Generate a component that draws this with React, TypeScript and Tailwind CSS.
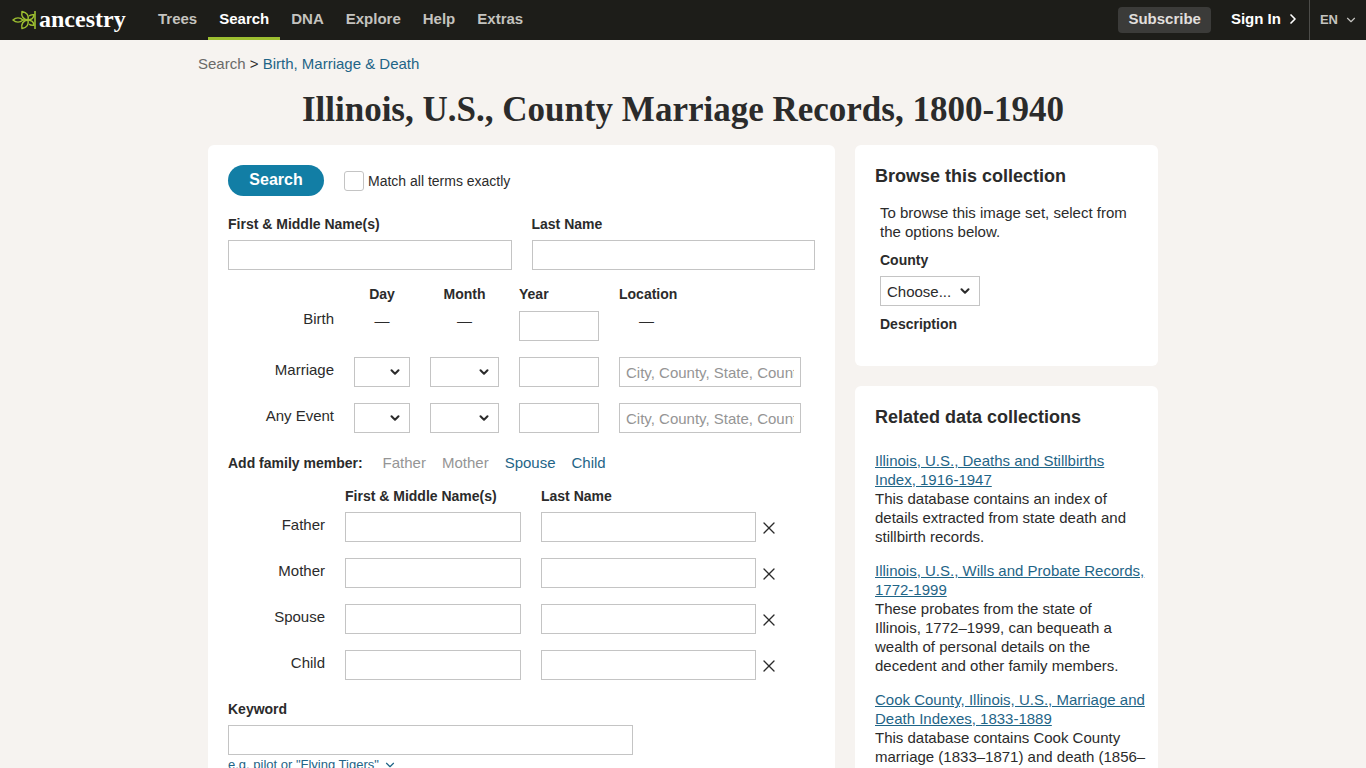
import { useState } from "react"
import type { ReactNode, SelectHTMLAttributes } from "react"
import { ChevronDown, ChevronRight, X } from "lucide-react"

const NAV = ["Trees", "Search", "DNA", "Explore", "Help", "Extras"]
const RELATIVES = ["Father", "Mother", "Spouse", "Child"]
const EVENTS = ["Marriage", "Any Event"]
const MONTHS = ["Jan", "Feb", "Mar", "Apr", "May", "Jun", "Jul", "Aug", "Sep", "Oct", "Nov", "Dec"]

const RELATED = [
  {
    title: "Illinois, U.S., Deaths and Stillbirths Index, 1916-1947",
    text: "This database contains an index of details extracted from state death and stillbirth records.",
  },
  {
    title: "Illinois, U.S., Wills and Probate Records, 1772-1999",
    text: "These probates from the state of Illinois,\u00a01772–1999, can bequeath a wealth of personal details on the decedent and other family members.",
  },
  {
    title: "Cook County, Illinois, U.S., Marriage and Death Indexes, 1833-1889",
    text: "This database contains Cook County marriage (1833–1871) and death (1856–1889) notices.",
  },
]

const field = "h-[30px] w-full min-w-0 border border-[#c4c4c4] bg-white px-1.5 text-[15px] text-[#2b2b2b] placeholder:text-[#959595]"
const label = "text-sm leading-5 font-bold"

function Logo() {
  return (
    <a href="#" aria-label="Ancestry home" className="flex h-10 w-[147px] items-center pl-3">
      <svg viewBox="0 0 24 20" className="h-5 w-6 shrink-0" fill="none" stroke="#9cbe30" strokeWidth="1.5" strokeLinejoin="round">
        <path d="M23 1v18" strokeWidth="1.6" />
        <path d="M1 10c3-2.800 7-2.800 10 0-3 2.800-7 2.800-10 0z" />
        <path d="M11 10h5" />
        <path d="M10 1.500C9 6 11 9.500 16 10c1-4.500-1-7.500-6-8.500z" />
        <path d="M10 18.500C9 14 11 10.500 16 10c1 4.500-1 7.500-6 8.500z" />
        <path d="M17 6c1-1 3-1.500 5-1.200-.2 3-2.500 5-6 5.200M17 14c1 1 3 1.500 5 1.200-.2-3-2.500-5-6-5.200" />
      </svg>
      <span className="ml-[3px] pb-0.5 font-['Liberation_Serif'] text-2xl leading-6 font-bold text-white">ancestry</span>
    </a>
  )
}

function Header() {
  return (
    <header className="flex h-10 items-center bg-[#1d1d19] text-[15px] font-bold">
      <Logo />
      <nav className="flex h-full">
        {NAV.map((item) => (
          <a
            key={item}
            href="#"
            className={
              item === "Search"
                ? "flex h-full items-center px-[11px] pb-0.5 text-white shadow-[inset_0_-3px_0_#9cbe30]"
                : "flex h-full items-center px-[11px] pb-0.5 text-[#c4c3bf]"
            }
          >
            {item}
          </a>
        ))}
      </nav>
      <div className="ml-auto flex h-full items-center">
        <a href="#" className="flex h-[26px] items-center rounded-sm bg-[#3b3b39] px-2.5 pb-0.5 text-[#e0dfdc]">
          Subscribe
        </a>
        <a href="#" className="ml-5 flex items-center gap-1 pb-0.5 text-white">
          Sign In
          <ChevronRight className="size-4" strokeWidth={2.5} />
        </a>
        <button className="ml-2 flex h-full items-center gap-1.5 border-l border-[#4c4c49] px-2 pl-2.5 text-[13px] text-[#c4c3bf]">
          EN
          <ChevronDown className="size-3.5" />
        </button>
      </div>
    </header>
  )
}

function Card({ children }: { children: ReactNode }) {
  return <section className="rounded-md bg-white p-5">{children}</section>
}

function Picker(props: SelectHTMLAttributes<HTMLSelectElement>) {
  return (
    <div className="relative">
      <select {...props} className={`${field} appearance-none`} />
      <ChevronDown className="pointer-events-none absolute top-2 right-2 size-3.5" strokeWidth={3.5} />
    </div>
  )
}

function SearchForm() {
  const [relatives, setRelatives] = useState(RELATIVES)

  return (
    <form onSubmit={(e) => e.preventDefault()}>
      <div className="flex items-start gap-5">
        <button className="h-[31px] w-24 rounded-full bg-[#127ea5] pb-0.5 text-base font-bold text-white">Search</button>
        <label className="mt-1.5 flex h-5 items-center gap-1 text-sm">
          <input type="checkbox" className="size-5 appearance-none rounded-[3px] border border-[#c4c4c4] bg-white checked:bg-[#127ea5]" />
          Match all terms exactly
        </label>
      </div>

      <div className="mt-[18px] grid grid-cols-2 gap-5">
        {["First & Middle Name(s)", "Last Name"].map((name) => (
          <label key={name} className={label}>
            {name}
            <input type="text" className={`${field} mt-1.5 block`} />
          </label>
        ))}
      </div>

      {/* Life events */}
      <div className="mt-3.5 grid grid-cols-[106px_56px_69px_80px_182px] gap-x-5 text-[15px]">
        <span />
        <span className={`${label} text-center`}>Day</span>
        <span className={`${label} text-center`}>Month</span>
        <span className={label}>Year</span>
        <span className={label}>Location</span>
      </div>
      <div className="mt-[7px] grid grid-cols-[106px_56px_69px_80px_182px] gap-x-5 gap-y-4 text-[15px]">
        <label htmlFor="birth-year" className="text-right leading-4">
          Birth
        </label>
        <span className="text-center leading-5">—</span>
        <span className="text-center leading-5">—</span>
        <input id="birth-year" type="text" className={field} />
        <span className="pl-5 leading-5">—</span>
        {EVENTS.map((event) => (
          <div key={event} className="contents">
            <span className="text-right leading-[26px]">{event}</span>
            <Picker aria-label={`${event} day`}>
              <option />
              {Array.from({ length: 31 }, (_, i) => (
                <option key={i}>{i + 1}</option>
              ))}
            </Picker>
            <Picker aria-label={`${event} month`}>
              <option />
              {MONTHS.map((month) => (
                <option key={month}>{month}</option>
              ))}
            </Picker>
            <input type="text" aria-label={`${event} year`} className={field} />
            <input type="text" aria-label={`${event} location`} placeholder="City, County, State, Country" className={field} />
          </div>
        ))}
      </div>

      {/* Family members */}
      <div className="mt-5 flex gap-4 text-[15px] leading-5">
        <span className={`${label} mr-1`}>Add family member:</span>
        {RELATIVES.map((name, i) => (
          <button
            key={name}
            type="button"
            disabled={i < 2}
            onClick={() => setRelatives([...relatives, name])}
            className="text-[#1f6587] disabled:text-[#959595]"
          >
            {name}
          </button>
        ))}
      </div>
      <div className="mt-[13px] grid grid-cols-[97px_176px_215px] gap-x-5">
        <span />
        <span className={label}>First &amp; Middle Name(s)</span>
        <span className={label}>Last Name</span>
      </div>
      <div className="mt-1.5 grid gap-4 text-[15px]">
        {relatives.map((name, i) => (
          <div key={i} className="grid grid-cols-[97px_176px_215px_16px] gap-x-5">
            <span className="text-right leading-[26px]">{name}</span>
            <input type="text" aria-label={`${name} first and middle names`} className={field} />
            <input type="text" aria-label={`${name} last name`} className={field} />
            <button
              type="button"
              aria-label={`Remove ${name}`}
              onClick={() => setRelatives(relatives.filter((_, n) => n !== i))}
              className="-ml-[17px] flex h-[30px] items-center pt-0.5"
            >
              <X className="size-5 shrink-0" strokeWidth={1.6} />
            </button>
          </div>
        ))}
      </div>

      <label className={`${label} mt-[19px] block`}>
        Keyword
        <input type="text" className={`${field} mt-1.5 block max-w-[405px]`} />
      </label>
      <button type="button" className="flex items-center gap-1 text-[13px] leading-5 text-[#1f6587]">
        e.g. pilot or "Flying Tigers"
        <ChevronDown className="size-3.5" />
      </button>
    </form>
  )
}

export default function App() {
  return (
    <div className="min-h-screen bg-[#f6f3f0] pb-5 font-['Liberation_Sans',sans-serif] text-[#2b2b2b]">
      <Header />
      <main className="mx-auto max-w-[970px]">
        <div className="pt-3.5 text-[15px] leading-5">
          <a href="#" className="text-[#6a6a68]">
            Search
          </a>
          {" > "}
          <a href="#" className="text-[#1f6587]">
            Birth, Marriage &amp; Death
          </a>
        </div>
        <h1 className="mt-4 text-center font-['Liberation_Serif',serif] text-[35px] leading-10 font-bold">
          Illinois, U.S., County Marriage Records, 1800-1940
        </h1>
        <div className="mt-[15px] grid grid-cols-[1fr_303px] items-start gap-5 px-2.5">
          <Card>
            <SearchForm />
          </Card>
          <aside className="grid gap-5">
            <Card>
              <h2 className="text-lg leading-[22px] font-bold">Browse this collection</h2>
              <div className="mt-4 px-[5px] pb-3 text-[15px] leading-[19px]">
                <p>To browse this image set, select from the options below.</p>
                <label htmlFor="county" className={`${label} mt-[9px] mb-1.5 block`}>
                  County
                </label>
                <div className="max-w-[100px]">
                  <Picker id="county">
                    <option>Choose...</option>
                    <option>Cook</option>
                  </Picker>
                </div>
                <p className={`${label} mt-2`}>Description</p>
              </div>
            </Card>
            <Card>
              <h2 className="text-lg leading-[22px] font-bold">Related data collections</h2>
              <ul className="mt-[23px] -mr-2 grid gap-[15px] text-[15px] leading-[19px]">
                {RELATED.map((item) => (
                  <li key={item.title}>
                    <a href="#" className="text-[#1f6587] underline">
                      {item.title}
                    </a>
                    <p>{item.text}</p>
                  </li>
                ))}
              </ul>
            </Card>
          </aside>
        </div>
      </main>
    </div>
  )
}
